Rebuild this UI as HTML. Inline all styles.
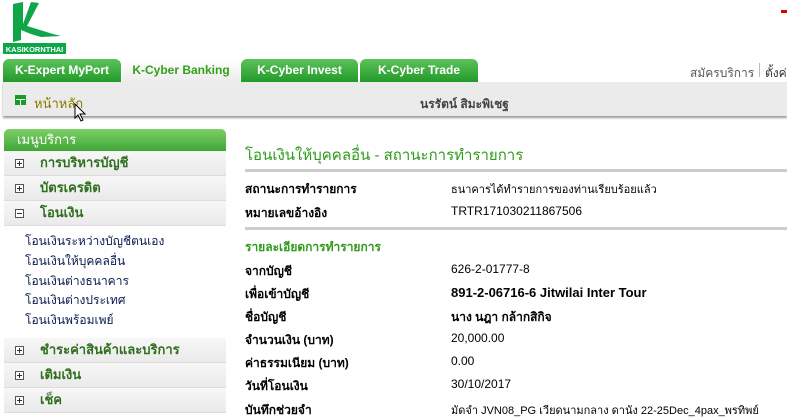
<!DOCTYPE html>
<html><head><meta charset="utf-8"><style>
*{margin:0;padding:0;box-sizing:border-box}
body{width:787px;height:420px;overflow:hidden;background:#fff;font-family:"Liberation Sans","Noto Sans CJK SC",Tahoma,sans-serif;position:relative;font-size:12px;color:#000}
.a{position:absolute;white-space:nowrap}
.tab{position:absolute;top:59px;height:23px;border-radius:6px 6px 0 0;background:linear-gradient(#5cc25a,#239a2a);color:#fff;font-weight:bold;font-size:12px;text-align:center;line-height:23px}
.tab.act{background:linear-gradient(#fff,#ececec);color:#33a01a}
.mi{position:absolute;left:4px;width:222px;height:25px;background:linear-gradient(#f7f7f7,#eaeaea);border-bottom:1px solid #ddd;color:#2f6e1f;font-weight:bold;font-size:13px;line-height:24px;padding-left:36px}
.mi svg{position:absolute;left:11px;top:8px}
.sub{position:absolute;left:25px;font-size:12px;color:#0a1a50}
.lb{position:absolute;left:245px;font-weight:bold;font-size:12px}
.v{position:absolute;left:451px;font-size:12px}
</style></head><body>
<svg class="a" style="left:3px;top:0" width="64" height="55" viewBox="0 0 64 55">
<path d="M10 4 L20 2 L20 24 L28 2 L36 3 L24 26 L50 34 L58 36 L38 37 L28 34 L18 30 L18 40 L10 42 Z" fill="#0fa64a"/>
<rect x="0" y="43" width="63" height="11" fill="#0fa64a"/>
<text x="31.5" y="52" fill="#fff" font-size="7.5" font-weight="bold" text-anchor="middle" font-family="Liberation Sans">KASIKORNTHAI</text>
</svg>
<div class="a" style="left:781px;top:10px;width:6px;height:3px;background:#d00"></div>
<div class="tab" style="left:3px;width:118px">K-Expert MyPort</div>
<div class="tab act" style="left:122px;width:118px">K-Cyber Banking</div>
<div class="tab" style="left:241px;width:117px">K-Cyber Invest</div>
<div class="tab" style="left:360px;width:118px">K-Cyber Trade</div>
<div class="a" style="left:690px;top:64px;color:#555;font-size:12px">สมัครบริการ</div>
<div class="a" style="left:759px;top:63px;width:1px;height:14px;background:#bbb"></div>
<div class="a" style="left:765px;top:64px;color:#333;font-size:12px">ตั้งค่า</div>
<div class="a" style="left:3px;top:82px;width:784px;height:34px;background:#ebebeb;box-shadow:0 2px 2px #999"></div>
<div class="a" style="left:15px;top:95px;width:11px;height:10px;background:#1a9a2a;border:1px solid #1a9a2a"><div style="position:absolute;left:0;top:3px;width:9px;height:1px;background:#fff"></div><div style="position:absolute;left:4px;top:3px;width:1px;height:6px;background:#fff"></div></div>
<div class="a" style="left:34px;top:93px;color:#8a7a00;font-size:13px">หน้าหลัก</div>
<div class="a" style="left:420px;top:95px;color:#444;font-size:12px;font-weight:bold">นรรัตน์ สิมะพิเชฐ</div>
<svg class="a" style="left:74px;top:103px" width="14" height="20"><path d="M1 1 L1 15 L4 12 L7 18 L9 17 L6 11 L11 11 Z" fill="#fff" stroke="#000"/></svg>
<div class="a" style="left:4px;top:129px;width:222px;height:22px;border-radius:5px 5px 0 0;background:linear-gradient(#7dd067,#3fa637);color:#fff;font-size:13px;line-height:22px;padding-left:13px">เมนูบริการ</div>
<div class="mi" style="top:151px"><svg width="9" height="9"><rect x=".5" y=".5" width="8" height="8" fill="#fff" stroke="#555"/><path d="M2 4.5H7M4.5 2V7" stroke="#333"/></svg>การบริหารบัญชี</div>
<div class="mi" style="top:176px"><svg width="9" height="9"><rect x=".5" y=".5" width="8" height="8" fill="#fff" stroke="#555"/><path d="M2 4.5H7M4.5 2V7" stroke="#333"/></svg>บัตรเครดิต</div>
<div class="mi" style="top:201px"><svg width="9" height="9"><rect x=".5" y=".5" width="8" height="8" fill="#fff" stroke="#555"/><path d="M2 4.5H7" stroke="#333"/></svg>โอนเงิน</div>
<div class="sub" style="top:232px">โอนเงินระหว่างบัญชีตนเอง</div>
<div class="sub" style="top:252px">โอนเงินให้บุคคลอื่น</div>
<div class="sub" style="top:272px">โอนเงินต่างธนาคาร</div>
<div class="sub" style="top:291px">โอนเงินต่างประเทศ</div>
<div class="sub" style="top:311px">โอนเงินพร้อมเพย์</div>
<div class="mi" style="top:338px"><svg width="9" height="9"><rect x=".5" y=".5" width="8" height="8" fill="#fff" stroke="#555"/><path d="M2 4.5H7M4.5 2V7" stroke="#333"/></svg>ชำระค่าสินค้าและบริการ</div>
<div class="mi" style="top:363px"><svg width="9" height="9"><rect x=".5" y=".5" width="8" height="8" fill="#fff" stroke="#555"/><path d="M2 4.5H7M4.5 2V7" stroke="#333"/></svg>เติมเงิน</div>
<div class="mi" style="top:388px"><svg width="9" height="9"><rect x=".5" y=".5" width="8" height="8" fill="#fff" stroke="#555"/><path d="M2 4.5H7M4.5 2V7" stroke="#333"/></svg>เช็ค</div>
<div class="a" style="left:245px;top:143px;color:#2f9a1a;font-size:15px">โอนเงินให้บุคคลอื่น - สถานะการทำรายการ</div>
<div class="a" style="left:245px;top:169px;width:542px;height:3px;background:#ccc"></div>
<div class="lb" style="top:180px">สถานะการทำรายการ</div><div class="v" style="top:180px;font-size:11px">ธนาคารได้ทำรายการของท่านเรียบร้อยแล้ว</div>
<div class="lb" style="top:204px">หมายเลขอ้างอิง</div><div class="v" style="top:204px">TRTR171030211867506</div>
<div class="a" style="left:245px;top:227px;width:542px;height:3px;background:#ccc"></div>
<div class="a" style="left:245px;top:238px;color:#2f9a1a;font-weight:bold;font-size:12px">รายละเอียดการทำรายการ</div>
<div class="lb" style="top:262px">จากบัญชี</div><div class="v" style="top:262px">626-2-01777-8</div>
<div class="lb" style="top:285px">เพื่อเข้าบัญชี</div><div class="v" style="top:285px;font-weight:bold;font-size:13px">891-2-06716-6 Jitwilai Inter Tour</div>
<div class="lb" style="top:308px">ชื่อบัญชี</div><div class="v" style="top:308px;font-weight:bold">นาง นฎา กล้ากสิกิจ</div>
<div class="lb" style="top:331px">จำนวนเงิน (บาท)</div><div class="v" style="top:331px">20,000.00</div>
<div class="lb" style="top:354px">ค่าธรรมเนียม (บาท)</div><div class="v" style="top:354px">0.00</div>
<div class="lb" style="top:377px">วันที่โอนเงิน</div><div class="v" style="top:377px">30/10/2017</div>
<div class="lb" style="top:401px">บันทึกช่วยจำ</div><div class="v" style="top:401px;font-size:11px">มัดจำ JVN08_PG เวียดนามกลาง ดานัง 22-25Dec_4pax_พรทิพย์</div>
</body></html>
